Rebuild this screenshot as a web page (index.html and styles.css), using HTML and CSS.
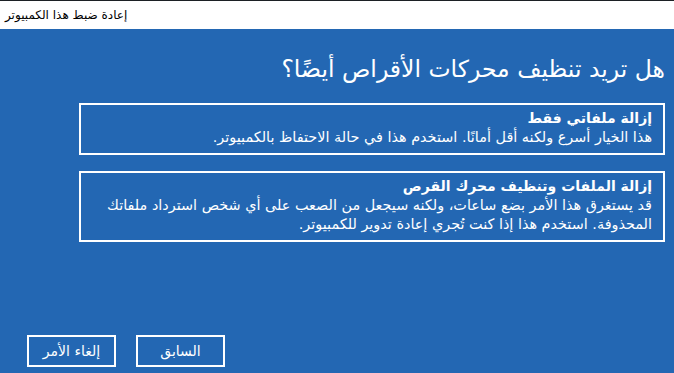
FILE: index.html
```html
<!DOCTYPE html>
<html lang="ar">
<head>
<meta charset="utf-8">
<title>إعادة ضبط هذا الكمبيوتر</title>
<link rel="stylesheet" href="styles.css">
</head>
<body>
<div class="window">
  <header class="titlebar">
    <span class="titlebar-text">إعادة ضبط هذا الكمبيوتر</span>
  </header>
  <main class="content" dir="rtl">
    <h1 class="heading">هل تريد تنظيف محركات الأقراص أيضًا؟</h1>
    <div class="options">
      <div class="option">
        <div class="option-title">إزالة ملفاتي فقط</div>
        <div class="option-desc">هذا الخيار أسرع ولكنه أقل أمانًا. استخدم هذا في حالة الاحتفاظ بالكمبيوتر.</div>
      </div>
      <div class="option">
        <div class="option-title">إزالة الملفات وتنظيف محرك القرص</div>
        <div class="option-desc">قد يستغرق هذا الأمر بضع ساعات، ولكنه سيجعل من الصعب على أي شخص استرداد ملفاتك المحذوفة. استخدم هذا إذا كنت تُجري إعادة تدوير للكمبيوتر.</div>
      </div>
    </div>
    <div class="spacer"></div>
    <footer class="buttons">
      <button class="btn">السابق</button>
      <button class="btn">إلغاء الأمر</button>
    </footer>
  </main>
</div>
</body>
</html>
```
FILE: styles.css
```css
html, body {
  margin: 0;
  padding: 0;
  width: 674px;
  height: 373px;
  overflow: hidden;
}
body {
  font-family: "Segoe UI", "DejaVu Sans", "Noto Sans", sans-serif;
}
.window {
  display: flex;
  flex-direction: column;
  height: 373px;
}
.titlebar {
  height: 28px;
  border-top: 1px solid #1c2024;
  background: #ffffff;
  display: flex;
  align-items: center;
  padding-left: 5px;
  flex: none;
}
.titlebar-text {
  font-size: 12px;
  color: #000;
  direction: rtl;
}
.content {
  flex: 1;
  background: #2367b3;
  color: #ffffff;
  display: flex;
  flex-direction: column;
  padding: 0 9px 6px 0;
}
.heading {
  margin: 25px 0 0 0;
  font-weight: normal;
  font-size: 23.5px;
  line-height: 30px;
}
.options {
  margin: 19px 0 0 79px;
  display: flex;
  flex-direction: column;
  gap: 16px;
}
.option {
  border: 2px solid #ffffff;
  padding: 4px 11px 6px 11px;
  font-size: 14.4px;
  line-height: 19px;
}
.option-title {
  font-weight: bold;
  font-size: 14px;
}
.spacer {
  flex: 1;
}
.buttons {
  display: flex;
  justify-content: flex-end;
  gap: 20px;
  padding-left: 27px;
}
.btn {
  width: 89px;
  height: 32px;
  border: 2px solid #ffffff;
  background: transparent;
  color: #ffffff;
  font-family: inherit;
  font-size: 14px;
  padding: 0;
}
```
